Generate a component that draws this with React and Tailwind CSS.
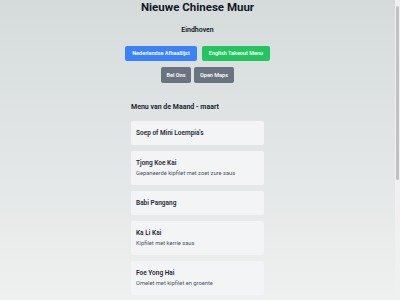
const menu = [
  { name: "Soep of Mini Loempia's" },
  { name: 'Tjong Koe Kai', desc: 'Gepaneerde kipfilet met zoet zure saus' },
  { name: 'Babi Pangang' },
  { name: 'Ka Li Kai', desc: 'Kipfilet met kerrie saus' },
  { name: 'Foe Yong Hai', desc: 'Omelet met kipfilet en groente' },
]

const App = () => {
  return (
    <div className="min-h-[300px] h-[300px] overflow-hidden flex bg-gradient-to-b from-[#d5dbdb] to-[#eff0f0] font-['Roboto',sans-serif] text-[#111827]">
      <div className="flex-1 flex flex-col items-center">
        {/* header */}
        <h1 className="text-[11.5px] leading-[14px] font-bold">Nieuwe Chinese Muur</h1>
        <h2 className="mt-[12px] text-[7px] leading-[9px] font-semibold">Eindhoven</h2>

        {/* links */}
        <div className="mt-[11px] flex gap-[5px]">
          <a className="h-[15px] w-[72px] flex items-center justify-center rounded-[2px] bg-[#3b82f6] text-white text-[5.5px] font-semibold">
            Nederlandse Afhaallijst
          </a>
          <a className="h-[15px] w-[68px] flex items-center justify-center rounded-[2px] bg-[#22c55e] text-white text-[5.5px] font-semibold">
            English Takeout Menu
          </a>
        </div>
        <div className="mt-[6px] flex gap-[3px]">
          <a className="h-[16px] w-[30px] flex items-center justify-center rounded-[2px] bg-[#6b7280] text-white text-[5.5px] font-semibold">
            Bel Ons
          </a>
          <a className="h-[16px] w-[40px] flex items-center justify-center rounded-[2px] bg-[#6b7280] text-white text-[5.5px] font-semibold">
            Open Maps
          </a>
        </div>

        {/* menu of the month */}
        <div className="mt-[19px] w-[133px]">
          <h3 className="text-[7px] leading-[10px] font-semibold">Menu van de Maand - maart</h3>
          <div className="mt-[9px] flex flex-col gap-[6px]">
            {menu.map((item) => (
              <div
                key={item.name}
                className={`rounded-[2px] bg-[#f3f4f6] px-[5px] flex flex-col justify-center ${item.desc ? 'h-[34px]' : 'h-[24px]'}`}
              >
                <p className="text-[6.5px] leading-[8px] font-semibold text-[#1f2937]">{item.name}</p>
                {item.desc && (
                  <p className="mt-[3px] text-[5.75px] leading-[7px] text-[#4b5563]">{item.desc}</p>
                )}
              </div>
            ))}
          </div>
        </div>
      </div>
      <div className="w-[5px] bg-[#f0f0f0] flex flex-col">
        <div className="mt-[6px] mx-[1px] h-[174px] rounded-full bg-[#c1c1c1]" />
      </div>
    </div>
  )
}

export default App
